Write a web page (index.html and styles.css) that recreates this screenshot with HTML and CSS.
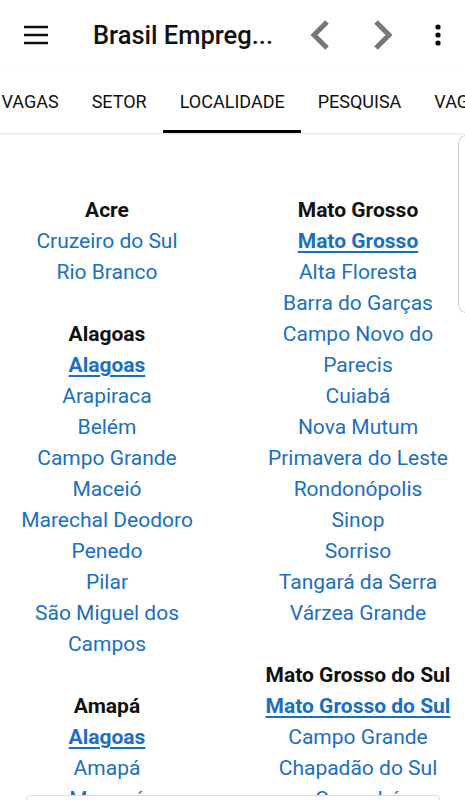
FILE: index.html
```html
<!DOCTYPE html>
<html lang="pt">
<head>
<meta charset="UTF-8">
<meta name="viewport" content="width=device-width, initial-scale=1.0">
<title>Brasil Empregos</title>
<link rel="stylesheet" href="styles.css">
</head>
<body>
<div id="toolbar">
    <button class="icon-btn menu-btn" aria-label="Menu">
        <svg width="24" height="24" viewBox="0 0 24 24"><path d="M0 4h24M0 12h24M0 20h24" stroke="#111" stroke-width="2.4"/></svg>
    </button>
    <div class="title">Brasil Empreg...</div>
    <button class="icon-btn nav-btn" aria-label="Voltar">
        <svg width="22" height="32" viewBox="0 0 22 32"><path d="M18 3L5 16l13 13" fill="none" stroke="#777" stroke-width="5"/></svg>
    </button>
    <button class="icon-btn nav-btn" aria-label="Avançar">
        <svg width="22" height="32" viewBox="0 0 22 32"><path d="M4 3l13 13L4 29" fill="none" stroke="#777" stroke-width="5"/></svg>
    </button>
    <button class="icon-btn more-btn" aria-label="Mais">
        <svg width="6" height="22" viewBox="0 0 6 22"><circle cx="3" cy="3" r="2.6"/><circle cx="3" cy="11" r="2.6"/><circle cx="3" cy="19" r="2.6"/></svg>
    </button>
</div>

<div id="tabs">
    <div class="tab">Vagas</div>
    <div class="tab">Setor</div>
    <div class="tab active">Localidade</div>
    <div class="tab">Pesquisa</div>
    <div class="tab">Vagas</div>
</div>

<div id="pager">
    <div id="content">
        <div class="column">
            <div class="state">
                <h2>Acre</h2>
                <a href="#">Cruzeiro do Sul</a>
                <a href="#">Rio Branco</a>
            </div>
            <div class="state">
                <h2>Alagoas</h2>
                <a href="#" class="all">Alagoas</a>
                <a href="#">Arapiraca</a>
                <a href="#">Belém</a>
                <a href="#">Campo Grande</a>
                <a href="#">Maceió</a>
                <a href="#">Marechal Deodoro</a>
                <a href="#">Penedo</a>
                <a href="#">Pilar</a>
                <a href="#">São Miguel dos Campos</a>
            </div>
            <div class="state">
                <h2>Amapá</h2>
                <a href="#" class="all">Alagoas</a>
                <a href="#">Amapá</a>
                <a href="#">Macapá</a>
            </div>
        </div>
        <div class="column">
            <div class="state">
                <h2>Mato Grosso</h2>
                <a href="#" class="all">Mato Grosso</a>
                <a href="#">Alta Floresta</a>
                <a href="#">Barra do Garças</a>
                <a href="#">Campo Novo do Parecis</a>
                <a href="#">Cuiabá</a>
                <a href="#">Nova Mutum</a>
                <a href="#">Primavera do Leste</a>
                <a href="#">Rondonópolis</a>
                <a href="#">Sinop</a>
                <a href="#">Sorriso</a>
                <a href="#">Tangará da Serra</a>
                <a href="#">Várzea Grande</a>
            </div>
            <div class="state">
                <h2>Mato Grosso do Sul</h2>
                <a href="#" class="all">Mato Grosso do Sul</a>
                <a href="#">Campo Grande</a>
                <a href="#">Chapadão do Sul</a>
                <a href="#">Corumbá</a>
            </div>
        </div>
    </div>
    <div class="side-card"></div>
    <div class="bottom-card"></div>
</div>
</body>
</html>
```

FILE: styles.css
```css
body {
    font-family: Roboto, "Noto Sans", Arial, sans-serif;
    margin: 0;
    padding: 0;
    background-color: #fff;
    color: #111;
    overflow: hidden;
    height: 800px;
}
#toolbar {
    display: flex;
    align-items: center;
    height: 70px;
    padding: 0 0 0 24px;
}
.icon-btn {
    border: none;
    background: none;
    padding: 0;
    display: flex;
    align-items: center;
    justify-content: center;
}
.menu-btn {
    width: 24px;
    margin-right: 45px;
}
.title {
    font-size: 25.5px;
    font-weight: 500;
    color: #111;
    width: 216px;
    white-space: nowrap;
}
.nav-btn {
    width: 22px;
    margin-right: 41px;
}
.more-btn {
    width: 6px;
}
#tabs {
    display: flex;
    height: 63px;
    margin-left: -15px;
    white-space: nowrap;
    box-shadow: 0 1px 2px rgba(0, 0, 0, 0.12);
    position: relative;
    z-index: 1;
}
.tab {
    padding: 0 16.5px;
    height: 63px;
    line-height: 64px;
    font-size: 18px;
    text-transform: uppercase;
    color: #111;
    flex: none;
    box-sizing: border-box;
    overflow: hidden;
}
.tab.active {
    border-bottom: 3px solid #000;
}
#pager {
    position: relative;
    height: 667px;
    overflow: hidden;
}
#content {
    display: grid;
    grid-template-columns: 214px 214px;
    column-gap: 37px;
    padding-top: 62px;
}
.column {
    display: flex;
    flex-direction: column;
    gap: 31px;
    text-align: center;
}
.state {
    display: flex;
    flex-direction: column;
    font-size: 21px;
    line-height: 31px;
}
.state h2 {
    margin: 0;
    font-size: 21px;
    font-weight: 700;
    color: #111;
}
.state a {
    color: #1a6fc2;
    text-decoration: none;
}
.state a.all {
    font-weight: 700;
    text-decoration: underline;
    text-decoration-thickness: 2px;
    text-underline-offset: 3px;
}
.side-card {
    position: absolute;
    left: 458px;
    top: 2px;
    width: 30px;
    height: 176px;
    border: 1px solid #ccc;
    border-radius: 8px;
    background: #fff;
}
.bottom-card {
    position: absolute;
    left: 26px;
    top: 662px;
    width: 412px;
    height: 40px;
    border: 1px solid #ddd;
    border-radius: 4px;
    background: #fff;
}
```
